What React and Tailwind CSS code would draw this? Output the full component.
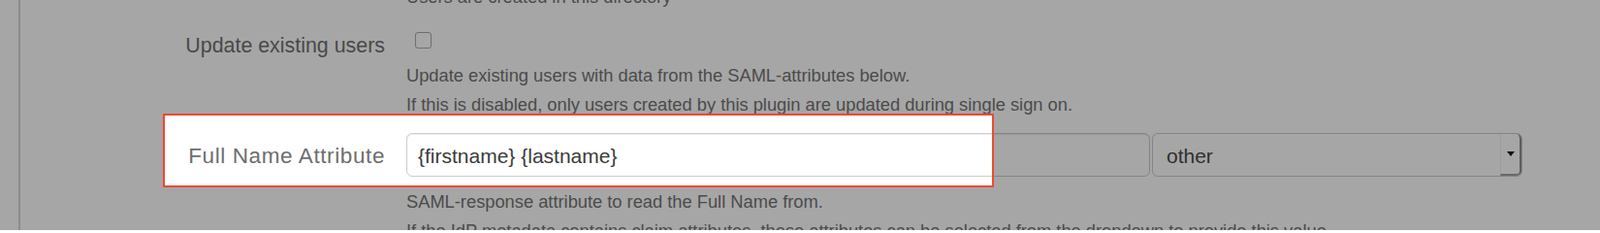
const HelpLine = ({ children }) => (
  <div className="h-[30px] whitespace-nowrap text-[18.3px] leading-[30px] text-[#4b4b4b]">{children}</div>
);

export default function App() {
  return (
    <div className="flex h-[237px] w-[1650px] overflow-hidden bg-[#a6a6a6] font-['Liberation_Sans',Arial,sans-serif]">
      <div className="w-[19px] shrink-0" />
      <div className="flex-1 border-l-2 border-[#8b8b8b]">
        {/* previous field's help text, cut off at the top */}
        <div className="-mt-[18px] flex">
          <div className="w-[398px] shrink-0" />
          <HelpLine>Users are created in this directory</HelpLine>
        </div>

        {/* Update existing users */}
        <div className="mt-[20px] flex">
          <div className="w-[398px] shrink-0 pr-[22px] text-right text-[21.4px] leading-[30px] text-[#494949]">
            Update existing users
          </div>
          <div className="flex flex-col">
            <div className="ml-[9px] mt-[1px] h-[17px] w-[17px] rounded-[3px] border border-[#6f6f6f]" />
            <div className="mt-[13px]">
              <HelpLine>Update existing users with data from the SAML-attributes below.</HelpLine>
              <HelpLine>If this is disabled, only users created by this plugin are updated during single sign on.</HelpLine>
            </div>
          </div>
        </div>

        {/* Full Name Attribute (highlighted) */}
        <div className="relative mt-[14px] flex h-[45px] items-center">
          <div className="absolute left-[147px] top-[-20px] z-0 h-[76px] w-[857px] bg-white" />
          <div className="relative z-10 w-[398px] shrink-0 pr-[22px] pt-[2px] text-right text-[22.5px] tracking-[0.6px] text-[#6e6e6e]">
            Full Name Attribute
          </div>
          <div className="relative z-10 flex h-full gap-[2px]">
            <input
              readOnly
              value="{firstname} {lastname}"
              className="h-[45px] w-[767px] rounded-[6px] border border-black/20 bg-transparent pl-[11px] pt-[2px] font-['Liberation_Sans',Arial,sans-serif] text-[21px] text-[#3a3a3a] shadow-[inset_0_1px_1px_rgba(0,0,0,0.075)] outline-none"
            />
            <div className="flex h-[45px] w-[382px] items-center rounded-[6px] border border-black/20">
              <span className="flex-1 pl-[14px] pt-[2px] text-[21px] text-[#2f2f2f]">other</span>
              <div className="flex h-full w-[22px] items-center justify-center rounded-r-[5px] border-b-2 border-l border-r-2 border-b-[#6a6a6a] border-l-black/5 border-r-[#5e5e5e]">
                <svg width="8" height="5" viewBox="0 0 8 5">
                  <path d="M0 0h8L4 5z" fill="#111" />
                </svg>
              </div>
            </div>
          </div>
          <div className="pointer-events-none absolute left-[147px] top-[-20px] z-20 h-[76px] w-[857px] border-2 border-[#ee4a2f]" />
        </div>

        <div className="mt-[11px] flex">
          <div className="w-[398px] shrink-0" />
          <div>
            <HelpLine>SAML-response attribute to read the Full Name from.</HelpLine>
            <HelpLine>If the IdP metadata contains claim attributes, those attributes can be selected from the dropdown to provide this value.</HelpLine>
          </div>
        </div>
      </div>
    </div>
  );
}
